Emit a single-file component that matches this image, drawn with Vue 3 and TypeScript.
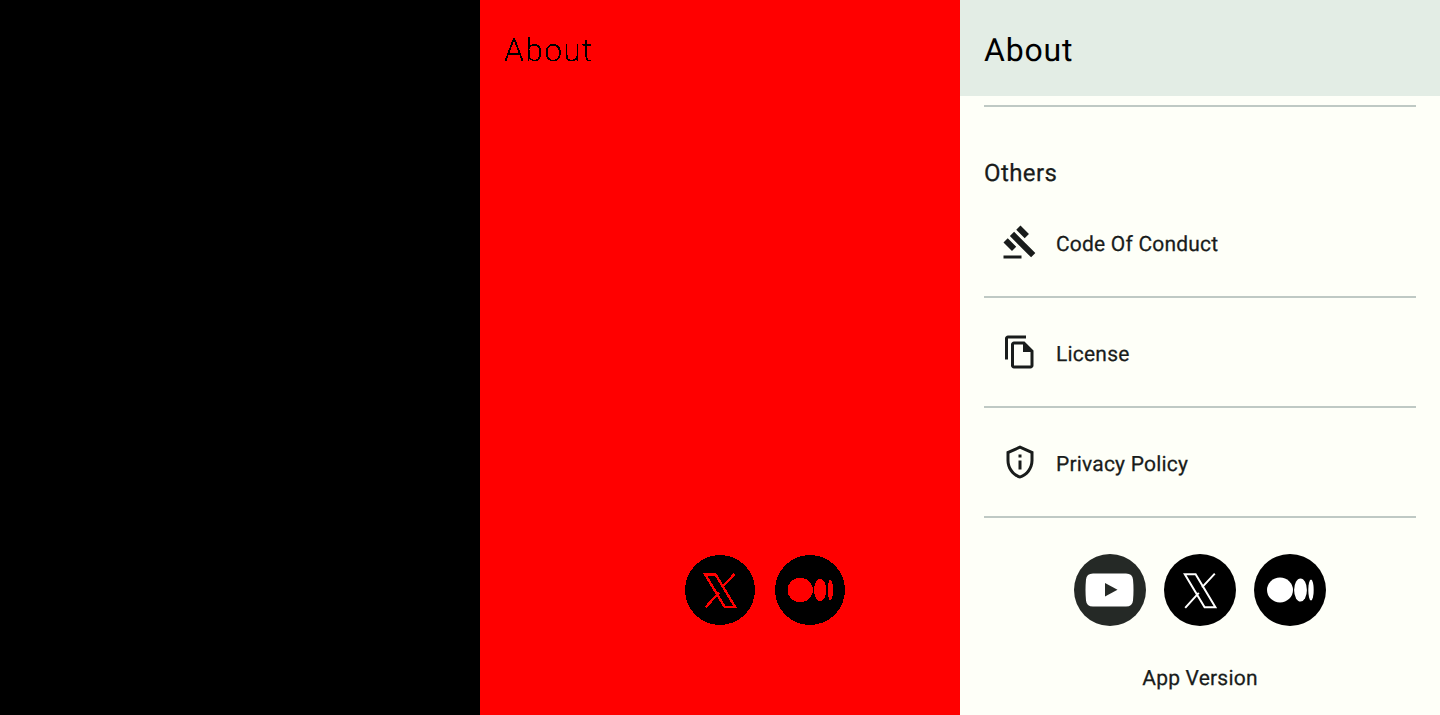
<script setup lang="ts">
interface LinkRow {
  label: string
  path: string
}

const rows: LinkRow[] = [
  {
    label: 'Code Of Conduct',
    path: 'M1 21h12v2H1zM5.245 8.07l2.83-2.827 14.14 14.142-2.828 2.828zM12.317 1l5.657 5.656-2.83 2.83-5.654-5.66zM3.825 9.485l5.657 5.657-2.828 2.828-5.657-5.657z',
  },
  {
    label: 'License',
    path: 'M16 1H4c-1.1 0-2 .9-2 2v14h2V3h12V1zm-1 4H8c-1.1 0-1.99.9-1.99 2L6 21c0 1.1.89 2 1.99 2H19c1.1 0 2-.9 2-2V11l-6-6zM8 21V7h6v5h5v9H8z',
  },
  {
    label: 'Privacy Policy',
    path: 'M12 3.19l7 3.11V11c0 4.52-2.98 8.69-7 9.93C7.98 19.69 5 15.52 5 11V6.3l7-3.11M12 1L3 5v6c0 5.55 3.84 10.74 9 12 5.16-1.26 9-6.45 9-12V5l-9-4zM11 7h2v2h-2V7zm0 4h2v6h-2v-6z',
  },
]

// X mark is a hollow diagonal with two thin arms
const xOutline = 'M20.800 20.200h10.800l19.800 33h-10.800zM50.800 19.600L38 33.400M21.200 53.800L34.800 38.800'
</script>

<template>
  <div class="page">
    <svg class="defs" width="0" height="0" aria-hidden="true">
      <filter id="hard-edge" x="0" y="0" width="100%" height="100%">
        <feComponentTransfer>
          <feFuncA type="discrete" tableValues="0 0 1 1" />
        </feComponentTransfer>
      </filter>
    </svg>

    <div class="pane-black"></div>

    <section class="pane-red">
      <h1 class="raw-title">About</h1>
      <div class="socials raw-socials">
        <span class="social raw-ghost"></span>
        <svg class="social" viewBox="0 0 72 72" shape-rendering="crispEdges">
          <circle cx="36" cy="36" r="36" fill="#000" />
          <path :d="xOutline" fill="none" stroke="#f00" stroke-width="2.4" />
        </svg>
        <svg class="social" viewBox="0 0 72 72" shape-rendering="crispEdges">
          <circle cx="36" cy="36" r="36" fill="#000" />
          <ellipse cx="26" cy="36" rx="13" ry="12.5" fill="#f00" />
          <ellipse cx="46.5" cy="36" rx="6.4" ry="11.5" fill="#f00" />
          <ellipse cx="57" cy="36" rx="2.7" ry="10.5" fill="#f00" />
        </svg>
      </div>
    </section>

    <section class="pane-about">
      <header class="top-bar">About</header>
      <div class="content">
        <div class="divider first"></div>
        <h2 class="section-title">Others</h2>
        <template v-for="row in rows" :key="row.label">
          <div class="link-row">
            <svg class="row-icon" viewBox="0 0 24 24"><path :d="row.path" fill="#191c1b" /></svg>
            <span class="row-label">{{ row.label }}</span>
          </div>
          <div class="divider"></div>
        </template>
        <div class="socials">
          <svg class="social" viewBox="0 0 72 72">
            <circle cx="36" cy="36" r="36" fill="#252926" />
            <path
              d="M19 19.500h33q6.500 0 7 6 .5 5 .5 10.500t-.5 10.500q-.5 6-7 6h-33q-6.500 0-7-6-.5-5-.5-10.500t.5-10.500q.5-6 7-6z"
              fill="#fff"
            />
            <path d="M31 29l12.500 6.700-12.500 6.700z" fill="#252926" />
          </svg>
          <svg class="social" viewBox="0 0 72 72">
            <circle cx="36" cy="36" r="36" fill="#000" />
            <path :d="xOutline" fill="none" stroke="#fff" stroke-width="2" />
          </svg>
          <svg class="social" viewBox="0 0 72 72">
            <circle cx="36" cy="36" r="36" fill="#000" />
            <ellipse cx="26" cy="36" rx="13" ry="12.5" fill="#fff" />
            <ellipse cx="46.5" cy="36" rx="6.4" ry="11.5" fill="#fff" />
            <ellipse cx="57" cy="36" rx="2.7" ry="10.5" fill="#fff" />
          </svg>
        </div>
        <p class="version">App Version</p>
      </div>
    </section>
  </div>
</template>

<style>
html,
body {
  margin: 0;
  background: #000;
}
</style>

<style scoped>
.page {
  display: grid;
  grid-template-columns: repeat(3, 1fr);
  height: 715px;
  overflow: hidden;
  font-family: Roboto, "Liberation Sans", sans-serif;
  text-rendering: geometricPrecision;
}

.defs {
  position: absolute;
}

.pane-black {
  background: #000;
}

.pane-red {
  display: flex;
  flex-direction: column;
  background: #f00;
}

.raw-title {
  margin: 0;
  padding-left: 24px;
  height: 96px;
  line-height: 100px;
  font-size: 32px;
  font-weight: 300;
  letter-spacing: 1.2px;
  color: #000;
  filter: url(#hard-edge);
}

.pane-about {
  display: flex;
  flex-direction: column;
  background: #fefff8;
  overflow: hidden;
}

.top-bar {
  flex: none;
  height: 96px;
  padding-left: 24px;
  line-height: 100px;
  font-size: 32px;
  letter-spacing: 0.8px;
  color: #000;
  background: #e3ede5;
}

.content {
  padding: 0 24px;
}

.divider {
  height: 2px;
  background: #bfc9c4;
}

.divider.first {
  margin-top: 9px;
}

.section-title {
  margin: 51px 0 0;
  height: 30px;
  line-height: 31px;
  font-size: 24px;
  letter-spacing: 0.4px;
  color: #191c1b;
  font-weight: 400;
  -webkit-text-stroke: 0.25px #191c1b;
}

.link-row {
  display: flex;
  align-items: center;
  gap: 18px;
  height: 108px;
  padding-left: 18px;
}

.row-icon {
  flex: none;
  width: 36px;
  height: 36px;
}

.row-label {
  padding-top: 6px;
  font-size: 21px;
  letter-spacing: 0.2px;
  color: #191c1b;
  -webkit-text-stroke: 0.25px #191c1b;
}

.socials {
  display: flex;
  justify-content: center;
  gap: 18px;
  margin-top: 36px;
}

.social {
  flex: none;
  width: 72px;
  height: 72px;
}

.raw-socials {
  gap: 20px;
  margin-top: 459px;
}

.raw-socials .social {
  width: 70px;
  height: 70px;
}

.raw-ghost {
  visibility: hidden;
}

.version {
  margin: 39px 0 0;
  line-height: 28px;
  font-size: 21px;
  letter-spacing: 0.2px;
  text-align: center;
  color: #191c1b;
  -webkit-text-stroke: 0.25px #191c1b;
}
</style>
